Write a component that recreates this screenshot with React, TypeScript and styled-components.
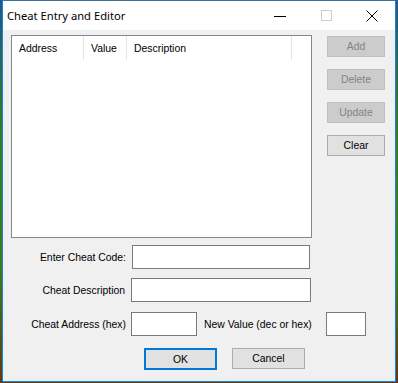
import React from 'react';
import styled, {createGlobalStyle} from "styled-components";

const Global = createGlobalStyle`
  html, body {
    margin: 0;
    padding: 0;
  }
  body {
    width: 398px;
    height: 383px;
    overflow: hidden;
    background: linear-gradient(180deg, #1d5a8c 0%, #2f7d2a 35%, #3c7a1f 70%, #5a3b17 100%);
  }
`

const Window = styled.div`
  margin-left: 2px;
  width: 392px;
  height: 380px;
  border: 1px solid #1883d7;
  border-top-color: #3a6f9a;
  background: #f0f0f0;
  display: flex;
  flex-direction: column;
  font-family: "Liberation Sans", Arial, sans-serif;
  font-size: 10.4px;
  color: #000;
`

const TitleBar = styled.div`
  height: 29px;
  background: #fff;
  display: flex;
  align-items: center;
`

const Title = styled.div`
  flex: 1;
  padding-left: 4px;
  padding-bottom: 1px;
  font-family: "Noto Sans", "Open Sans", sans-serif;
  font-size: 11.2px;
  color: #000;
`

const CaptionButton = styled.div`
  width: 46px;
  height: 29px;
  display: flex;
  align-items: center;
  justify-content: center;
`

const Client = styled.div`
  padding: 5px 0 0 8px;
  display: flex;
  flex-direction: column;
`

const TopRow = styled.div`
  display: flex;
  gap: 15px;
`

const ListView = styled.div`
  width: 299px;
  height: 201px;
  border: 1px solid #828790;
  background: #fff;
`

const HeaderRow = styled.div`
  display: flex;
  height: 24px;
`

const HeaderCell = styled.div<{ $w: number }>`
  width: ${p => p.$w}px;
  border-right: 1px solid #e5e5e5;
  padding-left: 7px;
  box-sizing: border-box;
  display: flex;
  align-items: center;
`

const SideButtons = styled.div`
  display: flex;
  flex-direction: column;
  gap: 12px;
  padding-top: 1px;
`

const Button = styled.div<{ $disabled?: boolean; $default?: boolean; $w?: number }>`
  width: ${p => p.$w ?? 58}px;
  height: ${p => p.$default ? 22 : 21}px;
  box-sizing: border-box;
  display: flex;
  align-items: center;
  justify-content: center;
  background: ${p => p.$disabled ? '#cccccc' : '#e1e1e1'};
  border: ${p => p.$default ? '2px solid #0078d7' : p.$disabled ? '1px solid #bfbfbf' : '1px solid #adadad'};
  color: ${p => p.$disabled ? '#838383' : '#000'};
`

const FieldRow = styled.div<{ $top: number }>`
  display: flex;
  align-items: center;
  margin-top: ${p => p.$top}px;
`

const Label = styled.div<{ $w: number; $gap: number; $pad?: number }>`
  width: ${p => p.$w}px;
  flex-shrink: 0;
  box-sizing: border-box;
  margin-right: ${p => p.$gap}px;
  padding-left: ${p => p.$pad ?? 0}px;
  text-align: ${p => p.$pad ? 'left' : 'right'};
  white-space: nowrap;
`

const Input = styled.div<{ $w: number }>`
  width: ${p => p.$w}px;
  flex-shrink: 0;
  height: 24px;
  box-sizing: border-box;
  border: 1px solid #7a7a7a;
  background: #fff;
`

const ButtonRow = styled.div`
  display: flex;
  gap: 15px;
  margin-top: 12px;
  padding-left: 133px;
`

function App() {
  return (
    <>
      <Global/>
      <Window>
        <TitleBar>
          <Title>Cheat Entry and Editor</Title>
          <CaptionButton>
            <svg width="12" height="12" viewBox="0 0 12 12">
              <line x1="0" y1="6.5" x2="12" y2="6.5" stroke="#000" strokeWidth="1"/>
            </svg>
          </CaptionButton>
          <CaptionButton>
            <svg width="12" height="12" viewBox="0 0 12 12">
              <rect x="1.5" y="0.5" width="10" height="10" fill="none" stroke="#cccccc" strokeWidth="1"/>
            </svg>
          </CaptionButton>
          <CaptionButton>
            <svg width="12" height="12" viewBox="0 0 12 12">
              <path d="M0.5 0.5 L11.5 11.5 M11.5 0.5 L0.5 11.5" stroke="#000" strokeWidth="1"/>
            </svg>
          </CaptionButton>
        </TitleBar>
        <Client>
          <TopRow>
            <ListView>
              <HeaderRow>
                <HeaderCell $w={72}>Address</HeaderCell>
                <HeaderCell $w={43}>Value</HeaderCell>
                <HeaderCell $w={165}>Description</HeaderCell>
              </HeaderRow>
            </ListView>
            <SideButtons>
              <Button $disabled>Add</Button>
              <Button $disabled>Delete</Button>
              <Button $disabled>Update</Button>
              <Button>Clear</Button>
            </SideButtons>
          </TopRow>
          <FieldRow $top={7}>
            <Label $w={115} $gap={6}>Enter Cheat Code:</Label>
            <Input $w={178}/>
          </FieldRow>
          <FieldRow $top={9}>
            <Label $w={114} $gap={6}>Cheat Description</Label>
            <Input $w={180}/>
          </FieldRow>
          <FieldRow $top={10}>
            <Label $w={115} $gap={5}>Cheat Address (hex)</Label>
            <Input $w={66}/>
            <Label $w={122} $gap={7} $pad={7}>New Value (dec or hex)</Label>
            <Input $w={40}/>
          </FieldRow>
          <ButtonRow>
            <Button $default $w={73}>OK</Button>
            <Button $w={73}>Cancel</Button>
          </ButtonRow>
        </Client>
      </Window>
    </>
  );
}

export default App;
